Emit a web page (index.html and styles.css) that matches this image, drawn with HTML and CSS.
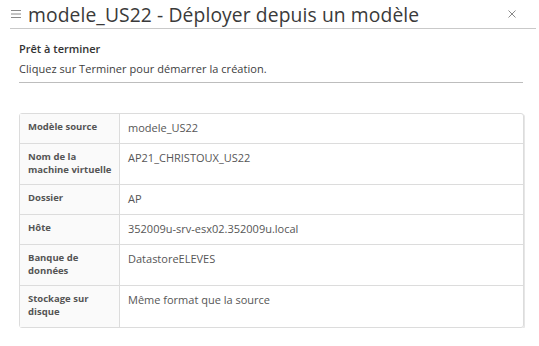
FILE: index.html
```html
<!DOCTYPE html>
<html lang="fr">
<head>
  <meta charset="UTF-8" />
  <title>modele_US22 - Déployer depuis un modèle</title>
  <link rel="stylesheet" href="styles.css">
</head>
<body>
  <div class="modal">
    <header class="modal-header">
      <svg class="menu-icon" width="10" height="8" viewBox="0 0 10 8">
        <path d="M0 0.5H10M0 4H10M0 7.5H10" stroke="#8a8a8a" stroke-width="1" fill="none"/>
      </svg>
      <h1>modele_US22 - Déployer depuis un modèle</h1>
      <svg class="close-icon" width="8" height="8" viewBox="0 0 8 8">
        <path d="M0.5 0.5L7.5 7.5M7.5 0.5L0.5 7.5" stroke="#8a8a8a" stroke-width="1" fill="none"/>
      </svg>
    </header>

    <section class="step">
      <h2>Prêt à terminer</h2>
      <p>Cliquez sur Terminer pour démarrer la création.</p>
    </section>

    <table class="summary">
      <tr>
        <th>Modèle source</th>
        <td>modele_US22</td>
      </tr>
      <tr class="tall">
        <th>Nom de la machine virtuelle</th>
        <td>AP21_CHRISTOUX_US22</td>
      </tr>
      <tr>
        <th>Dossier</th>
        <td>AP</td>
      </tr>
      <tr>
        <th>Hôte</th>
        <td>352009u-srv-esx02.352009u.local</td>
      </tr>
      <tr class="tall">
        <th>Banque de données</th>
        <td>DatastoreELEVES</td>
      </tr>
      <tr class="tall">
        <th>Stockage sur disque</th>
        <td>Même format que la source</td>
      </tr>
    </table>
  </div>
</body>
</html>
```

FILE: styles.css
```css
body {
  margin: 0;
  background-color: #ffffff;
  font-family: 'Open Sans', sans-serif;
  color: #454545;
}

.modal {
  width: 539px;
}

.modal-header {
  display: flex;
  align-items: center;
  height: 29px;
  margin: 0 3px 0 10px;
  border-bottom: 1px solid #c9c9c9;
  box-sizing: border-box;
}

.menu-icon {
  margin: 0 7px 0 1px;
}

.modal-header h1 {
  flex: 1;
  margin: 0;
  font-size: 19.3px;
  font-weight: 400;
  color: #3a3a3a;
  letter-spacing: 0.1px;
}

.close-icon {
  margin-right: 20px;
}

.step {
  margin: 0 16px 0 19px;
  padding-top: 12px;
  border-bottom: 1px solid #bdbdbd;
}

.step h2 {
  margin: 0;
  font-size: 11px;
  font-weight: 600;
  color: #333333;
  line-height: 16px;
}

.step p {
  margin: 4px 0 0;
  font-size: 11px;
  color: #3d3d3d;
  line-height: 16px;
  padding-bottom: 5px;
  letter-spacing: 0.05px;
}

.summary {
  margin: 30px 0 0 19px;
  width: 505px;
  border-collapse: separate;
  border-spacing: 0;
  border: 1px solid #dcdcdc;
  border-radius: 3px;
  box-shadow: 1px 1px 0 #e6e6e6;
}

.summary tr {
  height: 30px;
}

.summary tr.tall {
  height: 41px;
}

.summary th,
.summary td {
  vertical-align: top;
  text-align: left;
  padding: 6px 8px 0;
  border-bottom: 1px solid #dcdcdc;
  box-sizing: border-box;
}

.summary tr:last-child th,
.summary tr:last-child td {
  border-bottom: none;
}

.summary th {
  width: 100px;
  padding-right: 2px;
  background-color: #fafafa;
  border-right: 1px solid #dcdcdc;
  font-size: 9.5px;
  font-weight: 700;
  color: #555555;
  line-height: 13px;
}

.summary td {
  font-size: 11px;
  color: #565656;
  line-height: 15px;
}
```
